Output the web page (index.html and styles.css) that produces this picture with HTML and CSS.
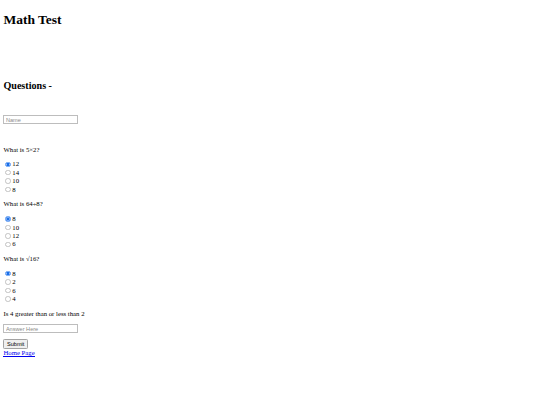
FILE: index.html
```html
<!DOCTYPE html>
<html lang="en">
<head>
<meta charset="utf-8">
<title>Math Test</title>
<link rel="stylesheet" href="styles.css">
</head>
<body>
<h1 class="title">Math Test</h1>
<div class="spacer"></div>
<h2 class="section">Questions -</h2>
<form class="quiz">
  <div class="name-row"><input class="text-field" type="text" placeholder="Name"></div>
  <p class="question">What is 5×2?</p>
  <div class="option"><input class="radio" type="radio" name="q1" id="q1a" checked><label for="q1a">12</label></div>
  <div class="option"><input class="radio" type="radio" name="q1" id="q1b"><label for="q1b">14</label></div>
  <div class="option"><input class="radio" type="radio" name="q1" id="q1c"><label for="q1c">10</label></div>
  <div class="option"><input class="radio" type="radio" name="q1" id="q1d"><label for="q1d">8</label></div>
  <p class="question">What is 64÷8?</p>
  <div class="option"><input class="radio" type="radio" name="q2" id="q2a" checked><label for="q2a">8</label></div>
  <div class="option"><input class="radio" type="radio" name="q2" id="q2b"><label for="q2b">10</label></div>
  <div class="option"><input class="radio" type="radio" name="q2" id="q2c"><label for="q2c">12</label></div>
  <div class="option"><input class="radio" type="radio" name="q2" id="q2d"><label for="q2d">6</label></div>
  <p class="question">What is √16?</p>
  <div class="option"><input class="radio" type="radio" name="q3" id="q3a" checked><label for="q3a">8</label></div>
  <div class="option"><input class="radio" type="radio" name="q3" id="q3b"><label for="q3b">2</label></div>
  <div class="option"><input class="radio" type="radio" name="q3" id="q3c"><label for="q3c">6</label></div>
  <div class="option"><input class="radio" type="radio" name="q3" id="q3d"><label for="q3d">4</label></div>
  <p class="question">Is 4 greater than or less than 2</p>
  <div class="answer-row"><input class="text-field" type="text" placeholder="Answer Here"></div>
  <div class="submit-row"><button class="submit" type="button">Submit</button></div>
</form>
<a class="home" href="#">Home Page</a>
</body>
</html>
```
FILE: styles.css
```css
body {
  margin: 3.4px;
  font-family: "Liberation Serif", "Times New Roman", serif;
  font-size: 6.75px;
  line-height: 7.8px;
  color: #000;
  background: #fff;
}
.title {
  font-size: 13.5px;
  line-height: 15.6px;
  margin: 9px 0;
}
.spacer {
  height: 34.6px;
}
.section {
  font-size: 10.125px;
  line-height: 11.7px;
  margin: 8.4px 0;
}
.quiz {
  margin: 0;
}
.name-row {
  display: flex;
  padding-top: 15.2px;
  margin-bottom: 21.6px;
}
.answer-row {
  display: flex;
  margin-bottom: 6.2px;
}
.text-field {
  box-sizing: border-box;
  width: 75px;
  height: 8.8px;
  margin: 0;
  padding: 0 1.5px;
  border: 1px solid #bdbdbd;
  border-radius: 0;
  background: #fff;
  font-family: "Liberation Sans", Arial, sans-serif;
  font-size: 5.6px;
  line-height: 6px;
  color: #000;
}
.text-field::placeholder {
  color: #8a8a8a;
}
.question {
  margin: 6.6px 0;
}
.option {
  display: flex;
  align-items: center;
  height: 8.44px;
}
.radio {
  appearance: none;
  -webkit-appearance: none;
  box-sizing: border-box;
  width: 5.5px;
  height: 5.5px;
  margin: 0 1.3px 0 2.1px;
  border: 0.6px solid #c2c2c2;
  border-radius: 50%;
  background: #fff;
}
.radio:checked {
  border-color: #5a98f2;
  background: radial-gradient(circle, #1a6fe8 0 45%, #9cc0f5 60%, #3b85f0 80%);
}
.submit-row {
  display: flex;
  margin-bottom: 0;
}
.submit {
  box-sizing: border-box;
  height: 9.4px;
  margin: 0;
  padding: 0 2.6px;
  border: 1px solid #a3a3a3;
  border-radius: 1.3px;
  background: #efefef;
  font-family: "Liberation Sans", Arial, sans-serif;
  font-size: 5.6px;
  line-height: 6px;
  color: #000;
}
.home {
  display: inline-block;
  color: #0000ee;
  text-decoration: none;
  line-height: 6.4px;
  border-bottom: 1px solid #0000ee;
}
```
